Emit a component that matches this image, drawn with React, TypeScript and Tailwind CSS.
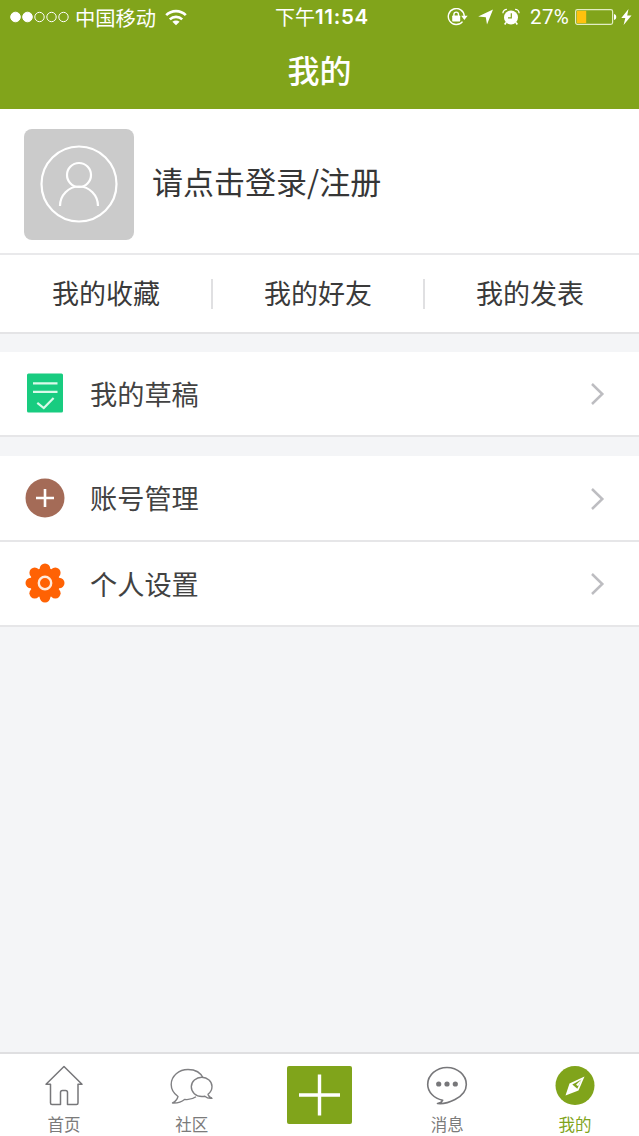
import type { ReactNode } from "react";

function StatusBar() {
  return (
    <div className="relative flex h-[34px] items-center justify-between pl-[10px] pr-[7px] text-[20px] leading-[34px] text-white">
      <div className="flex items-center">
        <svg width="60" height="12" viewBox="0 0 60 12" fill="none" stroke="#fff" strokeWidth="1">
          <circle cx="5.5" cy="6" r="4.8" fill="#fff" />
          <circle cx="17.5" cy="6" r="4.8" fill="#fff" />
          <circle cx="29.5" cy="6" r="4.7" />
          <circle cx="41.5" cy="6" r="4.7" />
          <circle cx="53.5" cy="6" r="4.7" />
        </svg>
        <span className="ml-[5px] text-[20.3px]">中国移动</span>
        <svg className="ml-[9px]" width="22" height="17" viewBox="0 0 22 17" fill="none" stroke="#fff" strokeWidth="2.6">
          <path d="M1.2 6.2C6.5.7 15.5.7 20.8 6.2" />
          <path d="M4.8 10.4C8.3 7 13.7 7 17.2 10.4" />
          <path d="M11 16.2 7.4 12.8C9.4 11.2 12.6 11.2 14.6 12.8Z" fill="#fff" stroke="none" />
        </svg>
      </div>
      <div className="absolute left-[275px] top-0 flex whitespace-nowrap">
        <span>下午</span>
        <span className="font-[Inter,sans-serif] text-[20.5px] font-semibold tracking-[0.7px]">11:54</span>
      </div>
      <div className="flex items-center">
        <svg width="21" height="18" viewBox="0 0 21 18" fill="none" stroke="#fff" strokeWidth="1.4">
          <path d="M15.5 13.6A8 8 0 1 1 17.3 8" />
          <path d="M14.2 7.8h6.4l-3.2 4.2z" fill="#fff" stroke="none" />
          <rect x="5.2" y="7.6" width="8" height="5.8" rx=".7" fill="#fff" stroke="none" />
          <path d="M6.9 8V6.4a2.3 2.3 0 0 1 4.6 0V8" />
        </svg>
        <svg className="ml-[10px]" width="15" height="16" viewBox="0 0 15 16" fill="#fff">
          <path d="M15 .6 9 15.4 7.8 8.3.2 7.6z" />
        </svg>
        <svg className="ml-[9px]" width="18" height="18" viewBox="0 0 18 18" fill="none">
          <circle cx="9" cy="9.5" r="7" fill="#fff" />
          <path d="M.9 5.3a4 4 0 0 1 4-4M17.1 5.3a4 4 0 0 0-4-4" stroke="#fff" strokeWidth="1.3" />
          <path d="m4 14.5-1.3 2M14 14.5l1.3 2" stroke="#fff" strokeWidth="1.6" />
          <path d="M9.3 5.2v4.7H6" stroke="#80a41c" strokeWidth="1.2" />
        </svg>
        <span className="ml-[10px] w-[40px] font-[Roboto,sans-serif] text-[20.5px] tracking-[0.4px]">27%</span>
        <svg className="ml-[5px]" width="42" height="18" viewBox="0 0 42 18">
          <rect x=".6" y="1.6" width="37" height="14.8" rx="1.8" fill="none" stroke="#e2edc4" strokeWidth="1.2" />
          <rect x="1.8" y="2.8" width="9.4" height="12.4" fill="#ffc20e" />
          <path d="M39 6c3 .6 3 5.4 0 6z" fill="#fff" />
        </svg>
        <svg className="ml-[4px]" width="11" height="18" viewBox="0 0 11 18" fill="#fff">
          <path d="M7.5 1 .3 10h4L2.6 17 10.5 7.6H6.2z" />
        </svg>
      </div>
    </div>
  );
}

function DraftIcon() {
  return (
    <svg className="-mt-px" width="40" height="40" viewBox="0 0 40 40" fill="none" stroke="#d9fae9" strokeWidth="2.2">
      <rect x="2" y=".5" width="36" height="39" rx="1.5" fill="#18cc80" stroke="none" />
      <path d="M8 10.3h24.5M8 18.8h24.5" />
      <path d="m12.3 29.8 6.5 5.2 9.8-10" />
    </svg>
  );
}

function AccountIcon() {
  return (
    <svg width="40" height="40" viewBox="0 0 40 40">
      <circle cx="20" cy="20" r="19.5" fill="#a46b57" />
      <path d="M11 20h18M20 11v18" stroke="#fff" strokeWidth="2.6" />
    </svg>
  );
}

function SettingsIcon() {
  return (
    <svg className="-mt-[2px]" width="40" height="40" viewBox="0 0 40 40" fill="#ff6204">
      <circle cx="20" cy="20" r="15" />
      <circle cx="20" cy="5.8" r="5.3" />
      <circle cx="30.3" cy="9.7" r="5.3" />
      <circle cx="34.2" cy="20" r="5.3" />
      <circle cx="30.3" cy="30.3" r="5.3" />
      <circle cx="20" cy="34.2" r="5.3" />
      <circle cx="9.7" cy="30.3" r="5.3" />
      <circle cx="5.8" cy="20" r="5.3" />
      <circle cx="9.7" cy="9.7" r="5.3" />
      <circle cx="20" cy="20" r="6.2" fill="none" stroke="#ffeadc" strokeWidth="2.4" />
    </svg>
  );
}

function Row({ icon, label, className }: { icon: ReactNode; label: string; className: string }) {
  return (
    <div className={`flex items-center border-b-2 border-[#e6e6e8] bg-white pl-[25px] pr-[34px] ${className}`}>
      {icon}
      <span className="-mt-[2px] ml-[25px] text-[27.2px] leading-10 text-[#424242]">{label}</span>
      <svg className="ml-auto mt-px" width="15" height="24" viewBox="0 0 15 24" fill="none" stroke="#bdbdc1" strokeWidth="2.5">
        <path d="M2 2 12.3 12 2 22" />
      </svg>
    </div>
  );
}

function Tab({ icon, label, active }: { icon: ReactNode; label: string; active?: boolean }) {
  return (
    <div className={`flex flex-1 flex-col items-center pt-[11px] ${active ? "text-[#7fa41b]" : "text-[#7b7b7b]"}`}>
      {icon}
      <span className="mt-[5px] text-[16.5px] leading-6">{label}</span>
    </div>
  );
}

export default function App() {
  const links = ["我的收藏", "我的好友", "我的发表"];

  return (
    <div className="flex h-[1136px] w-[639px] flex-col overflow-hidden bg-[#f4f5f7] font-['Noto_Sans_CJK_SC',sans-serif]">
      <header className="h-[109px] shrink-0 bg-[#81a41b]">
        <StatusBar />
        <h1 className="mt-[10px] text-center text-[32px] font-medium leading-[50px] text-white">我的</h1>
      </header>

      <section className="flex h-[146px] shrink-0 items-center border-b-2 border-[#e9e9eb] bg-white pl-6">
        <div className="mt-[6px] flex h-[111px] w-[110px] items-center justify-center rounded-lg bg-[#cbcbcb]">
          <svg width="80" height="80" viewBox="0 0 80 80" fill="none" stroke="#fff" strokeWidth="2.2">
            <circle cx="40" cy="40" r="37.5" />
            <circle cx="40" cy="31" r="12" />
            <path d="M21 62A19 19.5 0 0 1 59 62" />
          </svg>
        </div>
        <span className="ml-[18px] text-[31px] leading-[44px] text-[#363636]">请点击登录/注册</span>
      </section>

      <section className="flex h-[79px] shrink-0 items-center border-b-2 border-[#e4e4e6] bg-white pl-px pr-[4px]">
        {links.map((link, index) => (
          <div
            key={link}
            className={`flex h-[30px] flex-1 items-center justify-center text-[27px] text-[#3a3a3a] ${index > 0 ? "border-l-2 border-[#e0e0e2]" : ""}`}
          >
            {link}
          </div>
        ))}
      </section>

      <Row className="mt-[18px] h-[85px]" icon={<DraftIcon />} label="我的草稿" />
      <Row className="mt-[19px] h-[86px]" icon={<AccountIcon />} label="账号管理" />
      <Row className="h-[85px]" icon={<SettingsIcon />} label="个人设置" />

      <nav className="mt-auto flex h-[84px] shrink-0 border-t-2 border-[#dfdfe1] bg-white">
        <Tab
          label="首页"
          icon={
            <svg width="40" height="42" viewBox="0 0 40 42" fill="none" stroke="#77777a" strokeWidth="1.5" strokeLinejoin="round">
              <path d="M20 1.5 38 19.3h-4V38q0 1.5-1.5 1.5H23.5V27.5q0-2-2-2H18.5q-2 0-2 2V39.5H8Q6.5 39.5 6.5 38V19.3H2z" />
            </svg>
          }
        />
        <Tab
          label="社区"
          icon={
            <svg width="44" height="42" viewBox="0 0 44 42" fill="none" stroke="#808083" strokeWidth="1.4" strokeLinejoin="round">
              <path d="M33.5 13.5C31 8 25 4.5 18 4.5 9 4.5 1.2 11 1.2 19.5c0 5 2.6 9 6.8 12-.8 3-2.5 5-5.5 6.5 5 .2 9-.8 12-3.5 4 .5 8-.2 11.5-2.7" />
              <path d="M38 29.2c2.500-1.900 4-4.500 4-7.700 0-5.200-4.500-9.300-10.200-9.300S21.300 16.300 21.300 21.800s4.500 9.700 10.500 9.700c1 0 2-.1 3-.3 2 1.800 4.500 2.400 7.200 2.100-2.300-.9-3.600-2-4-4.100z" fill="#fff" />
            </svg>
          }
        />
        <div className="flex flex-1 justify-center pt-[12px]">
          <svg width="65" height="58" viewBox="0 0 65 58">
            <rect width="65" height="58" rx="2" fill="#80a41b" />
            <path d="M12 29h41M32.5 8.5v41" stroke="#fff" strokeWidth="3.4" />
          </svg>
        </div>
        <Tab
          label="消息"
          icon={
            <svg width="42" height="42" viewBox="0 0 42 42" fill="none" stroke="#77777a" strokeWidth="1.6">
              <path d="M11.5 38.5c2.700-.4 4.400-1.400 5.200-3.200C8 33.300 1.700 27 1.700 19.500 1.700 10 10.500 2.500 21 2.500s19.300 7.500 19.300 17c0 7.500-5.300 12-11.300 15-5.500 2.900-10.500 4.800-17.500 4z" strokeLinejoin="round" />
              <g fill="#77777a" stroke="none">
                <circle cx="12.7" cy="19" r="2.6" />
                <circle cx="21" cy="19" r="2.6" />
                <circle cx="29.3" cy="19" r="2.6" />
              </g>
            </svg>
          }
        />
        <Tab
          active
          label="我的"
          icon={
            <svg width="40" height="42" viewBox="0 0 40 42">
              <circle cx="20" cy="20.5" r="19.5" fill="#80a41b" />
              <path d="M29.5 11.5 14.5 18.5 10.5 30.5 23.5 25.500z" fill="#fff" />
              <path d="M26.500 14.500 17.300 19.600l5 4.200z" fill="#80a41b" />
              <path d="m27 14-6 5.800 2.200 1.500z" fill="#fff" />
            </svg>
          }
        />
      </nav>
    </div>
  );
}
